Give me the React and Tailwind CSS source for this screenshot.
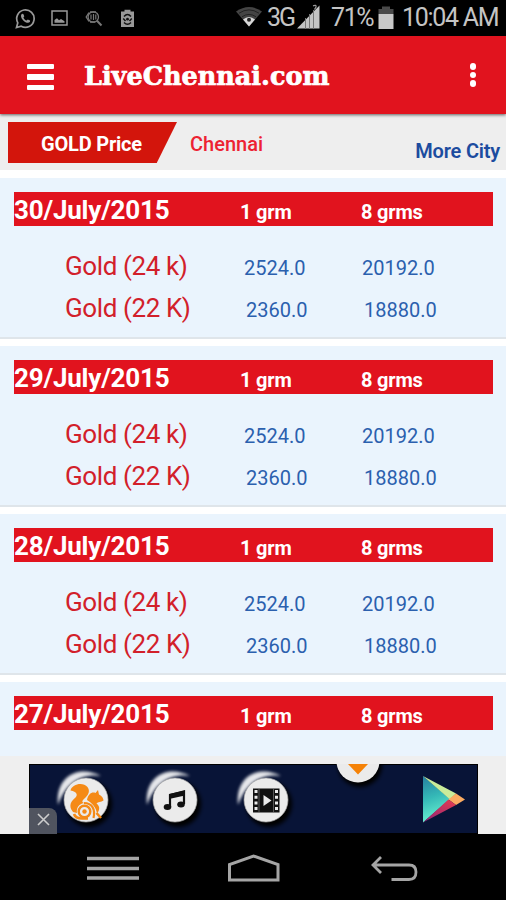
import { useState } from 'react'

const prices = [
  { date: '30/July/2015', k24: ['2524.0', '20192.0'], k22: ['2360.0', '18880.0'] },
  { date: '29/July/2015', k24: ['2524.0', '20192.0'], k22: ['2360.0', '18880.0'] },
  { date: '28/July/2015', k24: ['2524.0', '20192.0'], k22: ['2360.0', '18880.0'] },
  { date: '27/July/2015' },
]

const StatusBar = () => (
  <div className="h-9 shrink-0 bg-black flex items-center justify-between pl-[15px] pr-[9px] text-[#c4c4c4]">
    <div className="flex items-center text-[#999]">
      {/* WhatsApp */}
      <svg width="21" height="21" viewBox="0 0 21 21" fill="none" stroke="currentColor">
        <path d="M1.5 19.5 L2.8 14.8 A8.7 8.7 0 1 1 6.2 18.2 Z" strokeWidth="1.7" />
        <path d="M7.2 5.8 C5 7.2 6.2 10.4 8.3 12.4 C10.4 14.5 13.5 15.9 15 13.8 L15.1 12.6 L12.8 11.4 L11.6 12.6 C10.2 12 9 10.8 8.4 9.4 L9.3 8.3 L8.3 5.9 Z" fill="currentColor" stroke="none" />
      </svg>
      {/* Gallery */}
      <svg className="ml-[15px]" width="17" height="16" viewBox="0 0 17 16" fill="none" stroke="currentColor">
        <rect x="1" y="1" width="15" height="14" strokeWidth="1.5" />
        <path d="M3.5 12.8 V10 L6 8.2 L8 10.2 L10 9 L13.5 11.2 V12.8 Z" fill="currentColor" stroke="none" />
      </svg>
      {/* Search */}
      <svg className="ml-[17px]" width="18" height="17" viewBox="0 0 18 17" fill="none" stroke="#777">
        <path d="M4 2.5 L1.2 7 L4 11.5 M5 2 H11 M5 12 H10" strokeWidth="1.3" />
        <circle cx="8.3" cy="7" r="5.2" strokeWidth="1.3" />
        <path d="M6 4.5 V9.5 M8.5 4 V10 M10.8 4.5 V9.5" strokeWidth="1.2" />
        <path d="M12 10.8 L16.5 15.5" strokeWidth="2" />
      </svg>
      {/* Recycle */}
      <svg className="ml-[17px]" width="15" height="19" viewBox="0 0 15 19">
        <path d="M4.5 0.8 H10.5 V2.5 H14 V18 H1 V2.5 H4.5 Z" fill="currentColor" />
        <path d="M4 7.5 Q7.5 3.5 11 7.5 M4 13.5 Q7.5 17 11 13.5 M3.2 9.5 L5.5 12 M11.8 9.5 L9.5 12" fill="none" stroke="#111" strokeWidth="1.5" />
        <circle cx="7.5" cy="10.2" r="1.4" fill="#111" />
      </svg>
    </div>

    <div className="flex items-center">
      {/* Wifi */}
      <svg className="-mt-[3px]" width="28" height="21" viewBox="0 0 28 21">
        <path d="M14 20.5 L1 5.5 Q14 -3.5 27 5.5 Z" fill="#444" />
        <path d="M4 7.2 Q14 0.5 24 7.2 M7 10.8 Q14 6 21 10.8" fill="none" stroke="#222" strokeWidth="1" />
        <path d="M14 20.5 L8 13.5 Q14 8.5 20 13.5 Z" fill="#d8d8d8" />
        <circle cx="14" cy="13.8" r="2" fill="#222" />
      </svg>
      <span className="ml-[4px] w-[28px] text-[25px] leading-9 tracking-[-2px] whitespace-nowrap">3G</span>
      {/* Signal */}
      <svg className="ml-[2px] -mt-[3px]" width="23" height="26" viewBox="0 0 23 26">
        <path d="M0 24.5 L22.5 1.5 V24.5 Z" fill="#c4c4c4" />
        <path d="M8.5 14 V25 M12.5 10 V25 M16.5 6 V25" stroke="#777" strokeWidth="1" />
        <path d="M16 1.8 Q19.5 0.5 19 3 L17.5 5.5" fill="none" stroke="#999" strokeWidth="1.3" />
      </svg>
      <span className="ml-[11px] w-[42px] text-[25px] leading-9 tracking-[-1.4px] whitespace-nowrap">71%</span>
      {/* Battery */}
      <svg className="ml-[5px] -mt-[2px]" width="16" height="23" viewBox="0 0 16 23">
        <path d="M4 0.5 H12 V3 H15.5 V8 H0.5 V3 H4 Z" fill="#4a4a4a" />
        <rect x="0.5" y="8" width="15" height="15" fill="#c8c8c8" />
      </svg>
      <span className="ml-[8px] w-[95px] text-[25px] leading-9 tracking-[-1.3px] whitespace-nowrap">10:04 AM</span>
    </div>
  </div>
)

const Header = ({ onMenu }) => (
  <header className="relative z-10 h-[78px] shrink-0 bg-[#e1131e] flex items-center px-[27px] shadow-[0_1px_3px_rgba(0,0,0,0.6)]">
    <button onClick={onMenu} className="w-[27px] flex flex-col gap-[5px] pt-[4px]">
      <span className="h-[5.5px] w-full bg-white rounded-[1px]" />
      <span className="h-[5.5px] w-full bg-white rounded-[1px]" />
      <span className="h-[5.5px] w-full bg-white rounded-[1px]" />
    </button>
    <h1 className="ml-[30px] pt-[2px] font-['DejaVu_Serif',serif] font-bold text-[25.500px] leading-8 text-white whitespace-nowrap [-webkit-text-stroke:0.7px_white]">
      LiveChennai.com
    </h1>
    <button className="ml-auto mr-[3px] flex flex-col gap-[2px]">
      <span className="size-[6.5px] rounded-full bg-white" />
      <span className="size-[6.5px] rounded-full bg-white" />
      <span className="size-[6.5px] rounded-full bg-white" />
    </button>
  </header>
)

const CityBar = () => (
  <div className="h-14 shrink-0 bg-[#eeeeee] flex items-start pl-2 pr-[6px] pt-2 text-[20px]">
    <div className="w-[169px] h-[41px] pl-[33px] pt-px bg-[#d3150c] [clip-path:polygon(0_0,100%_0,88%_100%,0_100%)] text-white font-bold leading-[42px] tracking-[-0.2px] whitespace-nowrap">
      GOLD Price
    </div>
    <span className="ml-[13px] pt-px leading-[43px] font-medium text-[#ed2232]">Chennai</span>
    <span className="ml-auto pt-2 leading-[43px] font-semibold tracking-[-0.2px] text-[#1c4c9f] whitespace-nowrap">More City</span>
  </div>
)

const PriceRow = ({ label, values, shift }) => (
  <div className="flex items-baseline h-[42px] leading-[42px] pl-[65px]">
    <span className="w-[179px] text-[26px] tracking-[-0.4px] text-[#d2202a] whitespace-nowrap">{label}</span>
    <span className={`w-[118px] text-[20px] text-[#2b60ae] ${shift ? 'pl-[2px]' : ''}`}>{values[0]}</span>
    <span className={`text-[20px] text-[#2b60ae] ${shift ? 'pl-[2px]' : ''}`}>{values[1]}</span>
  </div>
)

const PriceCard = ({ item }) => (
  <section className="h-[161px] shrink-0 mb-[7px] bg-[#eaf4fd] border-b-2 border-[#dfe5ea] pt-[14px]">
    <div className="mx-[14px] mr-[13px] h-[34px] leading-[36px] bg-[#e1131e] flex items-baseline text-white font-bold whitespace-nowrap">
      <span className="w-[226px] text-[26px] tracking-[-0.2px]">{item.date}</span>
      <span className="w-[121px] text-[20px] tracking-[-0.2px]">1 grm</span>
      <span className="text-[20px] tracking-[-0.2px]">8 grms</span>
    </div>
    {item.k24 && (
      <div className="pt-[19px]">
        <PriceRow label="Gold (24 k)" values={item.k24} />
        <PriceRow label="Gold (22 K)" values={item.k22} shift />
      </div>
    )}
  </section>
)

// Glossy round badge, art is drawn around 0,0
const Badge = ({ x, children }) => (
  <g transform={`translate(${x} 36)`}>
    <circle cx="3" cy="4" r="23" fill="#000" filter="url(#soft)" />
    <path d="M-28 5 C-31 -24 -7 -36 15 -24 C-3 -27 -20 -18 -28 5 Z" fill="#fff" opacity="0.9" filter="url(#glow)" />
    <circle r="22" fill="#ebebeb" stroke="#aaa" strokeWidth="0.7" />
    {children}
  </g>
)

const AdBanner = ({ onClose }) => (
  <div className="relative mx-[29px] mr-[28px] h-[70px] overflow-hidden">
    <svg className="block" width="449" height="70" viewBox="0 0 449 70">
      <defs>
        <filter id="soft" x="-30%" y="-30%" width="160%" height="160%"><feGaussianBlur stdDeviation="2" /></filter>
        <filter id="glow" x="-30%" y="-30%" width="160%" height="160%"><feGaussianBlur stdDeviation="1.7" /></filter>
        <linearGradient id="teal" x1="0" y1="0" x2="0.2" y2="1">
          <stop offset="0" stopColor="#267fa0" />
          <stop offset="0.5" stopColor="#35b9b7" />
          <stop offset="1" stopColor="#68f0cf" />
        </linearGradient>
        <linearGradient id="pink" x1="1" y1="0" x2="0" y2="1">
          <stop offset="0" stopColor="#e83c50" />
          <stop offset="1" stopColor="#8b2378" />
        </linearGradient>
      </defs>
      <rect width="449" height="70" fill="#081437" stroke="#000" strokeWidth="2" />

      {/* Squirrel */}
      <Badge x="57">
        {/* tail */}
        <path d="M-15.5 -9.5 C-14 -16 -3 -18.5 1.5 -13 C5.5 -7.5 0 -3 -3 0 C-4.5 2 -3 3 -1 3 C-7 3.5 -10 8 -9 13 L-13 12 C-18 6 -15 1 -10.5 -2.5 C-8 -5 -9 -8.5 -15.5 -9.5 Z" fill="#f58a16" />
        {/* head and back */}
        <path d="M1 0 C2 -6 6 -8.5 9.5 -7 L12 -10 L13 -5.5 C16 -4 17.5 -1.500 17.5 0.5 C15 2.500 12 1.500 10.500 3.500 C15 7 13 11 11 13.500 C10 7 6 3 1 0 Z" fill="#f58a16" />
        {/* haunch */}
        <circle cx="-1.500" cy="11.500" r="5.800" fill="none" stroke="#f58a16" strokeWidth="2.400" />
        <circle cx="-1.500" cy="11.500" r="2.200" fill="#f58a16" />
        <path d="M-2 3 C6 3 9.500 9 7.500 18" fill="none" stroke="#f58a16" strokeWidth="2.200" />
        <path d="M-12 14 C-11 17 -8 18.500 -4 18.500 H2 M10.500 13 L15 18" fill="none" stroke="#f58a16" strokeWidth="2.600" />
      </Badge>

      {/* Music */}
      <Badge x="146">
        <path d="M-5 7 V-5 L9 -8.5 V4" fill="none" stroke="#111" strokeWidth="2.2" />
        <path d="M-6 -6 L10 -9.6 V-4.5 L-6 -1 Z" fill="#111" />
        <ellipse cx="-7.5" cy="7" rx="3.8" ry="3" fill="#111" />
        <ellipse cx="6" cy="4.5" rx="3.8" ry="3" fill="#111" />
      </Badge>

      {/* Film */}
      <Badge x="237">
        <rect x="-13" y="-11.5" width="26.5" height="24" fill="#111" />
        <path d="M-10 -10 V12 M10.5 -10 V12" stroke="#ebebeb" strokeWidth="3" strokeDasharray="3 2.7" />
        <path d="M-7 -11 V12 M7.5 -11 V12" stroke="#777" strokeWidth="0.7" />
        <path d="M-2.5 -5 L5.5 0.5 L-2.5 6 Z" fill="#ebebeb" />
      </Badge>

      {/* Arrow coming in from the top edge */}
      <circle cx="331" cy="1" r="22" fill="#000" filter="url(#soft)" />
      <circle cx="329" cy="-3" r="21.5" fill="#ebebeb" />
      <path d="M319 0 H339 L329 10.5 Z" fill="#f58207" />

      {/* Play store */}
      <path d="M394 12 L421 35 L394 58.5 Z" fill="url(#teal)" />
      <path d="M394 12 L427 29.5 L421 35.5 Z" fill="#c9ec9a" />
      <path d="M427 29.5 L436 35.5 L427 41 L419.5 35.5 Z" fill="#fbab61" />
      <path d="M394 58.5 L419.5 35.5 L427 41 Z" fill="url(#pink)" />
    </svg>
    <button
      onClick={onClose}
      className="absolute left-0 bottom-0 w-[28px] h-[26px] bg-[#50545f] rounded-tr-lg flex items-center justify-center"
    >
      <svg className="-mt-[3px]" width="13" height="13" viewBox="0 0 13 13" stroke="#ccc" strokeWidth="1.6">
        <path d="M1 1 L12 12 M12 1 L1 12" />
      </svg>
    </button>
  </div>
)

const NavBar = () => (
  <nav className="flex-1 bg-black flex items-start">
    <svg className="ml-[86px] mt-[22px]" width="54" height="26" viewBox="0 0 54 26">
      <path d="M1 2.5 H53 M1 12.5 H53 M1 22 H53" stroke="#a5a5a5" strokeWidth="3.4" />
    </svg>
    <svg className="ml-[87px] mt-[19px]" width="54" height="30" viewBox="0 0 54 30" fill="none" stroke="#a5a5a5" strokeWidth="3">
      <path d="M2.5 27 V11.5 L26.5 3 L51 11.5 V27 Z" />
    </svg>
    <svg className="ml-[89px] mt-[21px]" width="49" height="28" viewBox="0 0 49 28" fill="none" stroke="#a5a5a5" strokeWidth="2.8">
      <path d="M11 2 L3 10 L11 18 M3 10 H39 Q46 10 46 17 Q46 24.5 39 24.5 H21.5" />
    </svg>
  </nav>
)

const App = () => {
  const [menuOpen, setMenuOpen] = useState(false)
  const [showAd, setShowAd] = useState(true)

  return (
    <div className="w-[506px] h-[900px] flex flex-col overflow-hidden bg-white font-['Roboto',sans-serif]">
      <StatusBar />
      <Header onMenu={() => setMenuOpen(!menuOpen)} />
      <CityBar />

      {/* Price list */}
      <main className="h-[586px] shrink-0 pt-2 flex flex-col overflow-hidden">
        {prices.map((item) => (
          <PriceCard key={item.date} item={item} />
        ))}
      </main>

      {/* Ad */}
      <div className="h-[78px] shrink-0 pt-2 bg-[#efefef]">
        {showAd && <AdBanner onClose={() => setShowAd(false)} />}
      </div>
      <NavBar />
    </div>
  )
}

export default App
